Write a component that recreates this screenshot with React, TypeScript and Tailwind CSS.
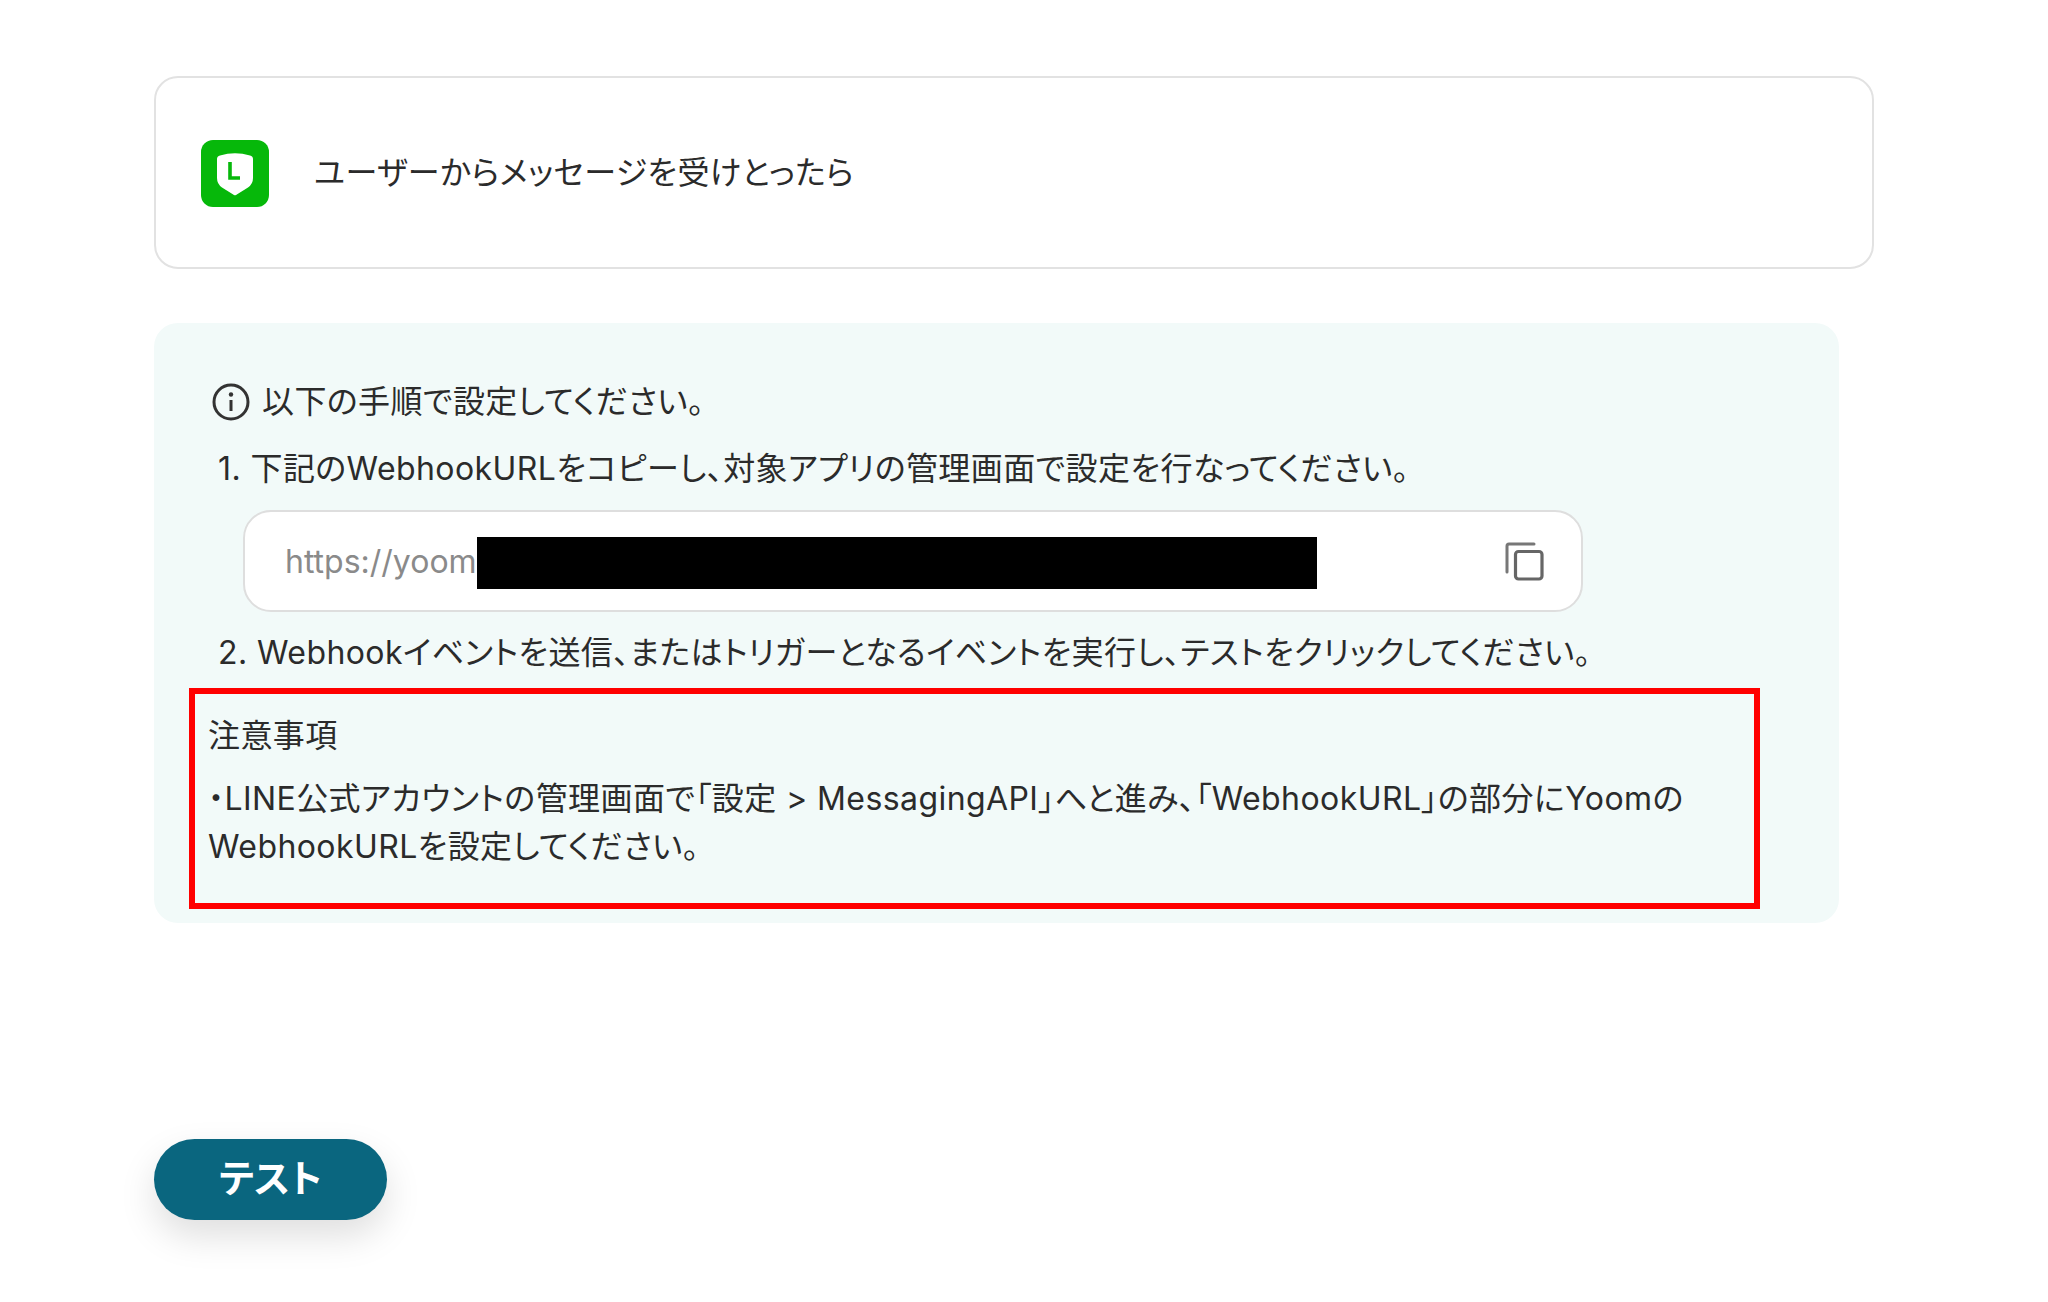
import React from 'react';

const jp = "font-['Inter','Noto_Sans_CJK_JP',sans-serif] [font-feature-settings:'palt']";

// LINEのロゴ
function LineLogo() {
  return (
    <svg width="68" height="67" viewBox="0 0 68 67" className="shrink-0">
      <rect x="0" y="0" width="68" height="67" rx="12" fill="#06b80a" />
      <path d="M16 19 Q16 16 19 15.500 Q34 11 49 15.500 Q52 16 52 19 V38 Q52 44 47 47.500 L35 55 Q34 55.500 33 55 L21 47.500 Q16 44 16 38 Z" fill="#fff" />
      <path d="M29 22 V38 H39" fill="none" stroke="#06b80a" strokeWidth="3.6" />
    </svg>
  );
}

function InfoIcon() {
  return (
    <svg width="38" height="38" viewBox="0 0 38 38" className="shrink-0">
      <circle cx="19" cy="19" r="17" fill="none" stroke="#333" strokeWidth="3" />
      <circle cx="19" cy="11.500" r="2.200" fill="#333" />
      <rect x="17.500" y="17" width="3" height="11" fill="#333" />
    </svg>
  );
}

function CopyIcon() {
  return (
    <svg width="40" height="40" viewBox="0 0 40 40" className="shrink-0">
      <path d="M3 31 V5 Q3 3 5 3 H30" fill="none" stroke="#777" strokeWidth="3" strokeLinecap="round" />
      <rect x="11.500" y="10.500" width="26.500" height="27.500" rx="3" fill="none" stroke="#666" strokeWidth="3.200" />
    </svg>
  );
}

export default function App() {
  return (
    <div className={`min-h-[1302px] bg-white pt-[76px] pl-[154px] text-[#2b2b2b] ${jp}`}>
      {/* トリガーのカード */}
      <div className="flex h-[193px] w-[1720px] items-center gap-[45px] rounded-[24px] border-2 border-[#e2e2e2] pl-[45px]">
        <div className="mt-[2px]">
          <LineLogo />
        </div>
        <div className="text-[32px] tracking-[0.42px]">ユーザーからメッセージを受けとったら</div>
      </div>

      {/* 手順パネル */}
      <div className="mt-[54px] h-[600px] w-[1685px] rounded-[24px] bg-[#f2faf9] pt-[58px] pl-[35px]">
        <div className="flex h-[42px] items-center gap-[12px] pl-[23px] text-[32px] tracking-[0.42px]">
          <InfoIcon />
          <span>以下の手順で設定してください。</span>
        </div>
        <div className="mt-[26px] pl-[29px] text-[32px] leading-[40px] tracking-[0.42px]">
          1. 下記のWebhookURLをコピーし、対象アプリの管理画面で設定を行なってください。
        </div>
        <div className="mt-[21px] ml-[54px] flex h-[102px] w-[1340px] items-center justify-between rounded-[28px] border-2 border-[#dedede] bg-white pr-[37px] pl-[40px]">
          <div className="flex items-center">
            <span className="mt-[2px] w-[192px] overflow-hidden text-[32px] whitespace-nowrap text-[#8a8a8a]">https://yoom</span>
            <div className="mt-[3px] h-[52px] w-[840px] bg-black" />
          </div>
          <CopyIcon />
        </div>
        <div className="mt-[21px] pl-[29px] text-[32px] leading-[40px] tracking-[0.42px]">
          2. Webhookイベントを送信、またはトリガーとなるイベントを実行し、テストをクリックしてください。
        </div>

        {/* 注意事項(赤枠) */}
        <div className="mt-[15px] h-[221px] w-[1571px] border-[6px] border-[#ff0000] pt-[22px] pl-[13px] text-[32px] tracking-[0.42px]">
          <div className="leading-[40px]">注意事項</div>
          <div className="mt-[19px] w-[1520px] leading-[48px]">
            ・LINE公式アカウントの管理画面で「設定 &gt; MessagingAPI」へと進み、「WebhookURL」の部分にYoomのWebhookURLを設定してください。
          </div>
        </div>
      </div>

      <button className="mt-[216px] flex h-[81px] w-[233px] items-center justify-center rounded-full bg-[#0a667f] pb-[2px] text-[38px] font-semibold text-white shadow-[0_16px_36px_rgba(0,0,0,0.13)]">
        テスト
      </button>
    </div>
  );
}
